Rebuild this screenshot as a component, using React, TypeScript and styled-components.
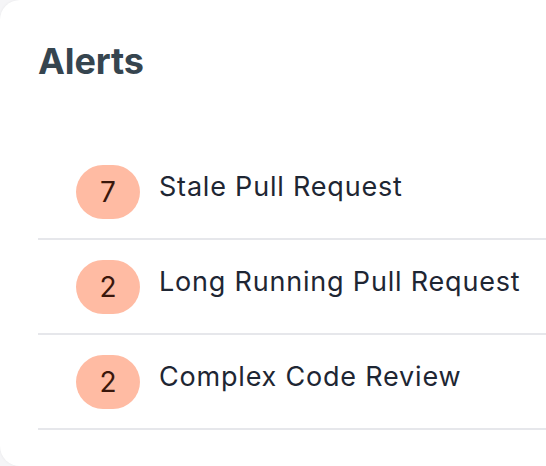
import React from "react";
import styled, { createGlobalStyle } from "styled-components";

const Global = createGlobalStyle`
  html, body {
    margin: 0;
    padding: 0;
    background: #f5f5f7;
    overflow: hidden;
  }
  body {
    font-family: Inter, "Noto Sans", sans-serif;
  }
`;

const Card = styled.section`
  box-sizing: border-box;
  width: 100%;
  height: 466px;
  background: #ffffff;
  border-radius: 20px 0 0 20px;
  box-shadow: 0 0 3px rgba(0, 0, 0, 0.06);
  padding: 39px 0 0 38px;
  display: flex;
  flex-direction: column;
`;

const Title = styled.h2`
  margin: 0;
  font-size: 36px;
  line-height: 44px;
  font-weight: 700;
  color: #36454f;
  letter-spacing: -0.1px;
`;

const List = styled.ul`
  list-style: none;
  margin: 62px 0 0 0;
  padding: 0;
`;

const Row = styled.li`
  box-sizing: border-box;
  height: 95px;
  display: flex;
  align-items: center;
  gap: 19px;
  padding-left: 38px;
  border-bottom: 2px solid #e6e7eb;
`;

const Badge = styled.span`
  flex: none;
  width: 64px;
  height: 54px;
  border-radius: 27px;
  background: #ffbba3;
  color: #3a170c;
  display: flex;
  align-items: center;
  justify-content: center;
  font-size: 28px;
  line-height: 1;
`;

const Label = styled.span`
  font-size: 27px;
  line-height: 32px;
  letter-spacing: 0.8px;
  color: #1e2633;
  margin-bottom: 10px;
`;

const alerts = [
  { count: 7, label: "Stale Pull Request" },
  { count: 2, label: "Long Running Pull Request" },
  { count: 2, label: "Complex Code Review" },
];

export default function App() {
  return (
    <>
      <Global />
      <Card>
        <Title>Alerts</Title>
        <List>
          {alerts.map((a) => (
            <Row key={a.label}>
              <Badge>{a.count}</Badge>
              <Label>{a.label}</Label>
            </Row>
          ))}
        </List>
      </Card>
    </>
  );
}
